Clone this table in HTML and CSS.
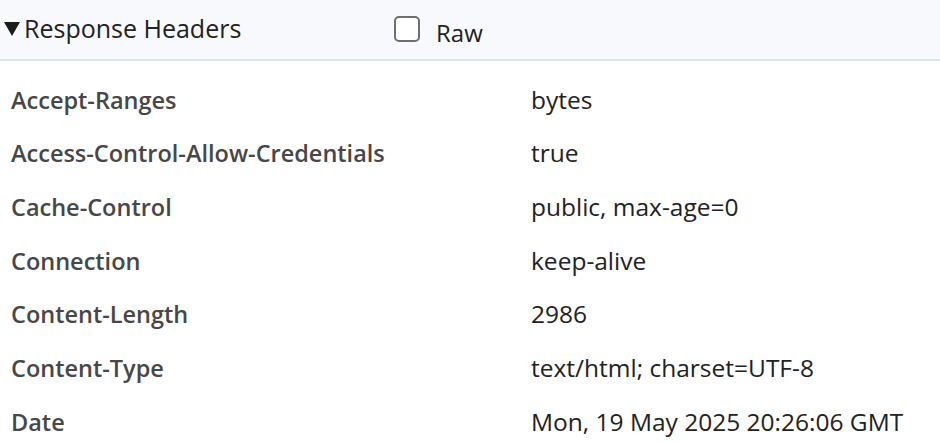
FILE: index.html
```html
<!DOCTYPE html>
<html>
<head>
<meta charset="utf-8">
<link rel="stylesheet" href="styles.css">
</head>
<body>
<div class="panel">
  <div class="head">
    <div class="title"><span class="tri"></span><span class="title-text">Response Headers</span></div>
    <label class="raw"><span class="box"></span><span class="raw-text">Raw</span></label>
  </div>
  <div class="rows">
    <div class="row"><div class="k">Accept-Ranges</div><div class="v">bytes</div></div>
    <div class="row"><div class="k">Access-Control-Allow-Credentials</div><div class="v">true</div></div>
    <div class="row"><div class="k">Cache-Control</div><div class="v">public, max-age=0</div></div>
    <div class="row"><div class="k">Connection</div><div class="v">keep-alive</div></div>
    <div class="row"><div class="k">Content-Length</div><div class="v">2986</div></div>
    <div class="row"><div class="k">Content-Type</div><div class="v">text/html; charset=UTF-8</div></div>
    <div class="row"><div class="k">Date</div><div class="v">Mon, 19 May 2025 20:26:06 GMT</div></div>
  </div>
</div>
</body>
</html>
```
FILE: styles.css
```css
html, body { margin: 0; padding: 0; background: #fff; }
body { font-family: "Open Sans", "Noto Sans", sans-serif; color: #222; overflow: hidden; }
.panel { width: 940px; }
.head {
  height: 59px;
  background: #f8f9fc;
  border-bottom: 2px solid #d6e4f5;
  display: flex;
  align-items: flex-start;
}
.title {
  display: flex;
  align-items: center;
  width: 394px;
  padding-top: 13px;
}
.tri {
  width: 0; height: 0;
  margin-left: 4px;
  margin-right: 4px;
  margin-top: 2px;
  border-left: 8px solid transparent;
  border-right: 8px solid transparent;
  border-top: 14px solid #1a1a1a;
}
.title-text { font-size: 25px; line-height: 30px; color: #222; }
.raw {
  display: flex;
  align-items: flex-start;
  padding-top: 16px;
  font-size: 24px;
  line-height: 30px;
  color: #222;
}
.raw-text { margin-top: 2px; }
.box {
  width: 22px; height: 22px;
  border: 2px solid #6f6f6f;
  border-radius: 5px;
  margin-right: 16px;
  background: #fff;
}
.rows { padding-top: 22.5px; }
.row {
  display: flex;
  height: 53.7px;
  align-items: flex-start;
  font-size: 24px;
  line-height: 32px;
}
.k {
  width: 520px;
  padding-left: 11px;
  font-weight: 600;
  font-size: 23.5px;
  color: #474747;
}
.v { color: #222; font-size: 24.5px; }
```
